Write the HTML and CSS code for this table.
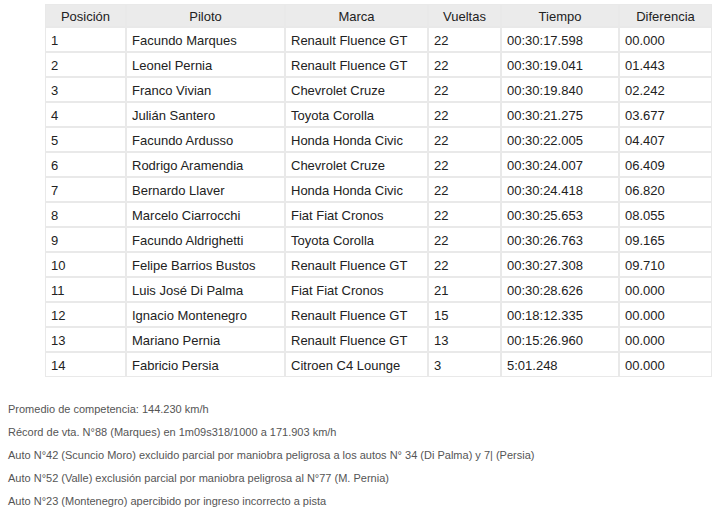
FILE: index.html
```html
<!DOCTYPE html>
<html lang="es">
<head>
<meta charset="utf-8">
<title>Resultados</title>
<link rel="stylesheet" href="styles.css">
</head>
<body>
<div class="page">
<table class="results">
<thead>
<tr>
<th class="c-pos">Posición</th>
<th class="c-pil">Piloto</th>
<th class="c-mar">Marca</th>
<th class="c-vue">Vueltas</th>
<th class="c-tie">Tiempo</th>
<th class="c-dif">Diferencia</th>
</tr>
</thead>
<tbody>
<tr><td>1</td><td>Facundo Marques</td><td>Renault Fluence GT</td><td>22</td><td>00:30:17.598</td><td>00.000</td></tr>
<tr><td>2</td><td>Leonel Pernia</td><td>Renault Fluence GT</td><td>22</td><td>00:30:19.041</td><td>01.443</td></tr>
<tr><td>3</td><td>Franco Vivian</td><td>Chevrolet Cruze</td><td>22</td><td>00:30:19.840</td><td>02.242</td></tr>
<tr><td>4</td><td>Julián Santero</td><td>Toyota Corolla</td><td>22</td><td>00:30:21.275</td><td>03.677</td></tr>
<tr><td>5</td><td>Facundo Ardusso</td><td>Honda Honda Civic</td><td>22</td><td>00:30:22.005</td><td>04.407</td></tr>
<tr><td>6</td><td>Rodrigo Aramendia</td><td>Chevrolet Cruze</td><td>22</td><td>00:30:24.007</td><td>06.409</td></tr>
<tr><td>7</td><td>Bernardo Llaver</td><td>Honda Honda Civic</td><td>22</td><td>00:30:24.418</td><td>06.820</td></tr>
<tr><td>8</td><td>Marcelo Ciarrocchi</td><td>Fiat Fiat Cronos</td><td>22</td><td>00:30:25.653</td><td>08.055</td></tr>
<tr><td>9</td><td>Facundo Aldrighetti</td><td>Toyota Corolla</td><td>22</td><td>00:30:26.763</td><td>09.165</td></tr>
<tr><td>10</td><td>Felipe Barrios Bustos</td><td>Renault Fluence GT</td><td>22</td><td>00:30:27.308</td><td>09.710</td></tr>
<tr><td>11</td><td>Luis José Di Palma</td><td>Fiat Fiat Cronos</td><td>21</td><td>00:30:28.626</td><td>00.000</td></tr>
<tr><td>12</td><td>Ignacio Montenegro</td><td>Renault Fluence GT</td><td>15</td><td>00:18:12.335</td><td>00.000</td></tr>
<tr><td>13</td><td>Mariano Pernia</td><td>Renault Fluence GT</td><td>13</td><td>00:15:26.960</td><td>00.000</td></tr>
<tr><td>14</td><td>Fabricio Persia</td><td>Citroen C4 Lounge</td><td>3</td><td>5:01.248</td><td>00.000</td></tr>
</tbody>
</table>
<div class="notes">
<p>Promedio de competencia: 144.230 km/h</p>
<p>Récord de vta. N°88 (Marques) en 1m09s318/1000 a 171.903 km/h</p>
<p>Auto N°42 (Scuncio Moro) excluido parcial por maniobra peligrosa a los autos N° 34 (Di Palma) y 7| (Persia)</p>
<p>Auto N°52 (Valle) exclusión parcial por maniobra peligrosa al N°77 (M. Pernia)</p>
<p>Auto N°23 (Montenegro) apercibido por ingreso incorrecto a pista</p>
</div>
</div>
</body>
</html>
```
FILE: styles.css
```css
html, body {
  margin: 0;
  padding: 0;
  background: #ffffff;
}
.page {
  padding: 4px 0 0 0;
  font-family: "Liberation Sans", Arial, sans-serif;
}
.results {
  margin-left: 45px;
  width: 667px;
  table-layout: fixed;
  border-collapse: separate;
  border-spacing: 0;
  font-size: 13px;
  color: #222222;
}
.results th,
.results td {
  box-sizing: border-box;
  border: 1px solid #e9e9e9;
  padding: 2px 5px 0;
  text-align: left;
  font-weight: normal;
  white-space: nowrap;
  overflow: hidden;
}
.results th {
  background: #ebebeb;
  text-align: center;
  height: 23px;
}
.results td {
  height: 25px;
}
.c-pos { width: 81px; }
.c-pil { width: 159px; }
.c-mar { width: 143px; }
.c-vue { width: 73px; }
.c-tie { width: 118px; }
.c-dif { width: 93px; }
.notes {
  padding: 16px 0 0 8px;
  font-size: 11px;
  color: #555555;
}
.notes p {
  margin: 10px 0;
  line-height: 13px;
}
```
